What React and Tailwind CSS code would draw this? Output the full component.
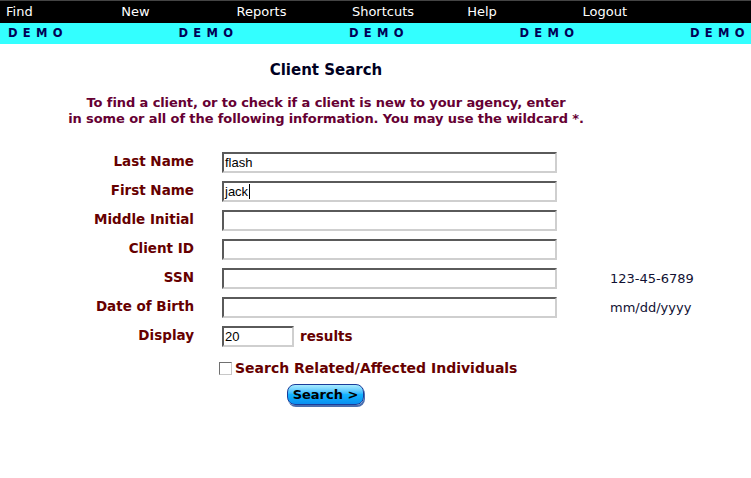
import React from "react";

const menu = ["Find", "New", "Reports", "Shortcuts", "Help", "Logout"];

function Field({ value, caret, w = "w-[335px]" }) {
  return (
    <div
      className={`${w} h-[21px] border-2 border-t-[#5a5a5a] border-l-[#5a5a5a] border-b-[#cfcfcf] border-r-[#cfcfcf] bg-white flex items-center pl-[1px] text-[13px] text-black leading-none`}
      style={{ fontFamily: '"Liberation Sans", Arial, sans-serif' }}
    >
      <span>{value}</span>
      {caret && <span className="inline-block w-[1px] h-[15px] bg-black ml-[1px]" />}
    </div>
  );
}

const rows = [
  { label: "Last Name", value: "flash" },
  { label: "First Name", value: "jack", caret: true },
  { label: "Middle Initial" },
  { label: "Client ID" },
  { label: "SSN", hint: "123-45-6789" },
  { label: "Date of Birth", hint: "mm/dd/yyyy" },
];

export default function App() {
  const vera = { fontFamily: '"DejaVu Sans", Verdana, sans-serif' };
  return (
    <div className="w-[751px] h-[478px] bg-white overflow-hidden" style={vera}>
      <div className="h-[1px] bg-[#444]" />
      <div className="h-[22px] bg-black flex items-center text-white text-[13px]">
        {menu.map((m) => (
          <div key={m} className="w-[115.3px] pl-[6px] shrink-0 leading-none -mt-[1px]">
            {m}
          </div>
        ))}
      </div>
      <div className="h-[21px] bg-[#33ffff] flex items-center text-[#000055] text-[11.5px] font-bold">
        {[0, 1, 2, 3, 4].map((i) => (
          <div key={i} className="w-[170.5px] pl-[8px] shrink-0 tracking-[5.3px] leading-none">
            DEMO
          </div>
        ))}
      </div>

      <div className="w-[652px] text-center">
        <div className="pt-[17px] text-[15px] font-bold text-[#000022] leading-[18px]">Client Search</div>
        <div className="mt-[16px] text-[13px] font-bold text-[#660033] leading-[16px] tracking-[-0.1px]">
          To find a client, or to check if a client is new to your agency, enter
          <br />
          in some or all of the following information. You may use the wildcard *.
        </div>
      </div>

      <div className="mt-[25px] grid grid-cols-[194px_335px_auto] gap-x-[28px] gap-y-[8px] items-center">
        {rows.map((r) => (
          <React.Fragment key={r.label}>
            <div className="text-right text-[13.5px] font-bold text-[#660000] leading-none -mt-[2px]">{r.label}</div>
            <Field value={r.value} caret={r.caret} />
            <div className="pl-[25px] text-[13px] text-[#111133] leading-none">{r.hint}</div>
          </React.Fragment>
        ))}
        <div className="text-right text-[13.5px] font-bold text-[#660000] leading-none -mt-[1px]">Display</div>
        <div className="flex items-center gap-[6px]">
          <Field value="20" w="w-[72px]" />
          <span className="text-[13.5px] font-bold text-[#660000] leading-none">results</span>
        </div>
        <div />
      </div>

      <div className="mt-[14px] pl-[219px] flex items-center gap-[3px]">
        <span className="w-[13px] h-[13px] border border-t-[#707070] border-l-[#707070] border-b-[#c8c8c8] border-r-[#c8c8c8] bg-white inline-block" />
        <span className="text-[14px] font-bold text-[#660000] leading-none">
          Search Related/Affected Individuals
        </span>
      </div>

      <div className="mt-[9px] pl-[287px]">
        <button
          className="w-[77px] h-[21px] rounded-[8px] border border-[#1a3d9a] bg-gradient-to-b from-[#a8ecff] via-[#14b4ff] to-[#0a8ff0] shadow-[1px_2px_0_#4a6fb0] flex items-center justify-center text-[13px] font-bold text-black leading-none"
          style={vera}
        >
          Search &gt;
        </button>
      </div>
    </div>
  );
}
